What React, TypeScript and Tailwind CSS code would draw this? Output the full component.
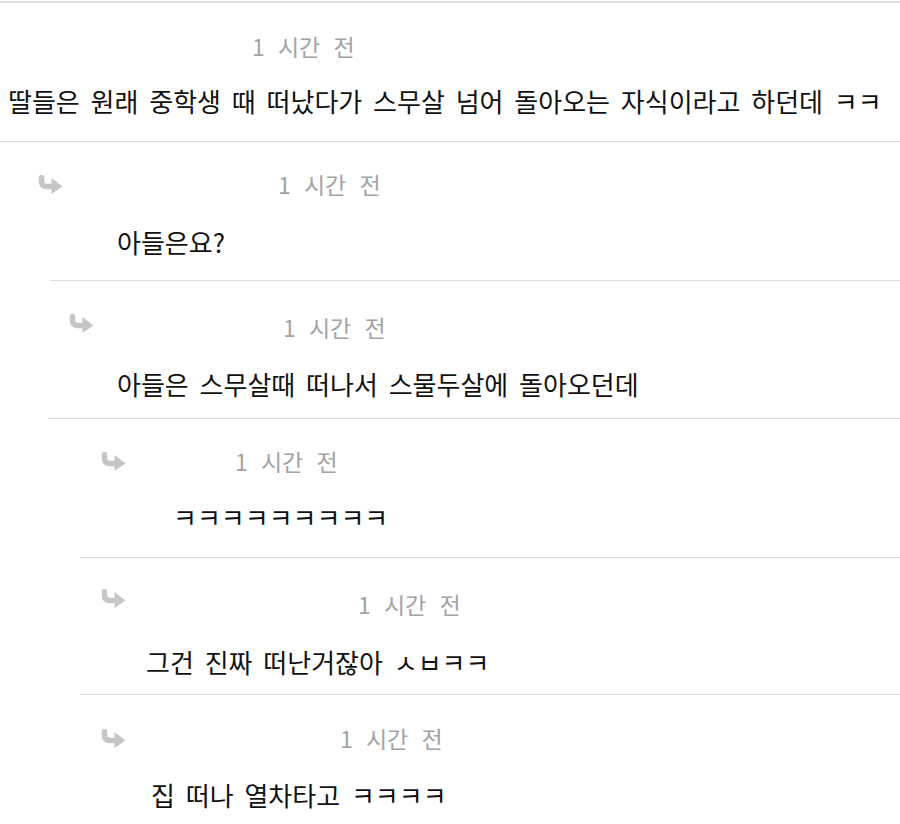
import React from "react";

type Reply = {
  icon: boolean;
  iconPad: string;
  iconLift: string;
  timePad: string;
  textPad: string;
  pt: string;
  gap: string;
  pb: string;
  line: string;
  text: string;
};

const items: Reply[] = [
  {
    icon: false,
    iconPad: "",
    iconLift: "",
    timePad: "ml-[252px]",
    textPad: "pl-[8px]",
    pt: "pt-[27px]",
    gap: "mt-[21px]",
    pb: "pb-[22px]",
    line: "ml-0",
    text: "딸들은 원래 중학생 때 떠났다가 스무살 넘어 돌아오는 자식이라고 하던데 ㅋㅋ",
  },
  {
    icon: true,
    iconPad: "ml-[37px]",
    iconLift: "mb-0",
    timePad: "ml-[215px]",
    textPad: "pl-[117px]",
    pt: "pt-[26px]",
    gap: "mt-[24px]",
    pb: "pb-[20px]",
    line: "ml-[50px]",
    text: "아들은요?",
  },
  {
    icon: true,
    iconPad: "ml-[68px]",
    iconLift: "mb-[8px]",
    timePad: "ml-[189px]",
    textPad: "pl-[117px]",
    pt: "pt-[30px]",
    gap: "mt-[23px]",
    pb: "pb-[16px]",
    line: "ml-[48px]",
    text: "아들은 스무살때 떠나서 스물두살에 돌아오던데",
  },
  {
    icon: true,
    iconPad: "ml-[100px]",
    iconLift: "mb-0",
    timePad: "ml-[109px]",
    textPad: "pl-[173px]",
    pt: "pt-[26px]",
    gap: "mt-[22px]",
    pb: "pb-[22px]",
    line: "ml-[80px]",
    text: "ㅋㅋㅋㅋㅋㅋㅋㅋㅋ",
  },
  {
    icon: true,
    iconPad: "ml-[100px]",
    iconLift: "mb-[12px]",
    timePad: "ml-[232px]",
    textPad: "pl-[146px]",
    pt: "pt-[30px]",
    gap: "mt-[24px]",
    pb: "pb-[14px]",
    line: "ml-[80px]",
    text: "그건 진짜 떠난거잖아 ㅅㅂㅋㅋ",
  },
  {
    icon: true,
    iconPad: "ml-[100px]",
    iconLift: "mb-0",
    timePad: "ml-[214px]",
    textPad: "pl-[151px]",
    pt: "pt-[27px]",
    gap: "mt-[23px]",
    pb: "pb-[20px]",
    line: "hidden",
    text: "집 떠나 열차타고 ㅋㅋㅋㅋ",
  },
];

function ReplyArrow({ className }: { className?: string }) {
  return (
    <svg
      className={className}
      width="26"
      height="19"
      viewBox="0 0 26 19"
      fill="none"
    >
      <path
        d="M4.5 2.5 V6 Q4.5 11.5 10 11.5 H17"
        stroke="#c6c6c6"
        strokeWidth="5.5"
        strokeLinecap="round"
      />
      <path d="M14.5 3 L25.5 11.5 L14.5 19 Z" fill="#c6c6c6" />
    </svg>
  );
}

export default function App() {
  return (
    <div className="w-[900px] h-[824px] overflow-hidden bg-white font-['Malgun_Gothic','Noto_Sans_CJK_KR',sans-serif]">
      <div className="h-px bg-white" />
      <div className="h-[2px] bg-[#dedede]" />
      {items.map((c, i) => (
        <div key={i} className="flex flex-col">
          <div className={`flex flex-col ${c.pt} ${c.pb}`}>
            <div className="flex items-center h-8">
              {c.icon && <ReplyArrow className={`shrink-0 ${c.iconPad} ${c.iconLift}`} />}
              <span
                className={`${c.timePad} text-[23px] leading-8 text-[#a3a3a3] [word-spacing:8px] whitespace-nowrap`}
              >
                1 시간 전
              </span>
            </div>
            <div
              className={`${c.gap} ${c.textPad} text-[26px] leading-9 text-[#111111] [word-spacing:5px] whitespace-nowrap`}
            >
              {c.text}
            </div>
          </div>
          <div className={`h-px bg-[#dcdcdc] ${c.line}`} />
        </div>
      ))}
    </div>
  );
}
